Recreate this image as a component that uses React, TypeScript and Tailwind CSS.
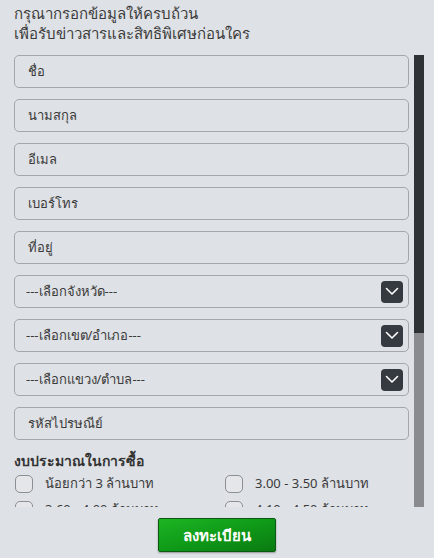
import React from "react";

const fields = ["ชื่อ", "นามสกุล", "อีเมล", "เบอร์โทร", "ที่อยู่"];
const selects = ["---เลือกจังหวัด---", "---เลือกเขต/อำเภอ---", "---เลือกแขวง/ตำบล---"];
const budgets = [
  "น้อยกว่า 3 ล้านบาท",
  "3.00 - 3.50 ล้านบาท",
  "3.60 - 4.00 ล้านบาท",
  "4.10 - 4.50 ล้านบาท",
];

function Field({ label }: { label: string }) {
  return (
    <div className="h-[33px] shrink-0 w-full rounded-[5px] border border-[#a3a6aa] bg-[#dee1e5] flex items-center px-[13px] text-[13px] text-[#3a3a3a]">
      {label}
    </div>
  );
}

function SelectField({ label }: { label: string }) {
  return (
    <div className="h-[33px] shrink-0 w-full rounded-[5px] border border-[#a3a6aa] bg-[#dee1e5] flex items-center justify-between pl-[11px] pr-[5px] text-[13px] text-[#3a3a3a]">
      <span>{label}</span>
      <div className="w-[22px] h-[22px] rounded-[4px] bg-[#353a40] flex items-center justify-center">
        <svg width="14" height="9" viewBox="0 0 14 9" fill="none">
          <path d="M1.5 1.5 L7 7 L12.5 1.5" stroke="#ffffff" strokeWidth="1.6" strokeLinecap="round" strokeLinejoin="round" />
        </svg>
      </div>
    </div>
  );
}

export default function App() {
  return (
    <div
      className="w-[434px] h-[558px] bg-[#dee1e5] flex flex-col overflow-hidden"
      style={{ fontFamily: "Tahoma, 'Noto Sans', 'DejaVu Sans', sans-serif" }}
    >
      <div className="pl-[14px] pt-[3px] text-[15px] leading-[20px] text-[#3b3b3b]">
        <div>กรุณากรอกข้อมูลให้ครบถ้วน</div>
        <div>เพื่อรับข่าวสารและสิทธิพิเศษก่อนใคร</div>
      </div>
      <div className="ml-[14px] mt-[12px] w-[410px] h-[452px] flex gap-[5px]">
        <div className="w-[395px] h-full overflow-hidden flex flex-col">
          <div className="flex flex-col gap-[11px]">
            {fields.map((f) => (
              <Field key={f} label={f} />
            ))}
            {selects.map((s) => (
              <SelectField key={s} label={s} />
            ))}
            <Field label="รหัสไปรษณีย์" />
          </div>
          <div className="mt-[11px] text-[14px] font-bold text-[#333] leading-[20px] shrink-0">งบประมาณในการซื้อ</div>
          <div className="grid grid-cols-[210px_1fr] gap-y-[8px] mt-[4px] shrink-0">
            {budgets.map((b) => (
              <div key={b} className="flex items-center h-[18px]">
                <div className="w-[18px] h-[18px] ml-[1px] rounded-[5px] border border-[#8b8e92] bg-[#e4e6e9] shrink-0" />
                <span className="ml-[12px] text-[13px] text-[#3a3a3a] whitespace-nowrap">{b}</span>
              </div>
            ))}
          </div>
        </div>
        <div className="w-[10px] h-full bg-[#898b8f] flex flex-col">
          <div className="h-[278px] bg-[#2f3235]" />
        </div>
      </div>
      <div className="flex justify-center mt-[11px]">
        <button className="w-[118px] h-[34px] rounded-[2px] border border-[#0b5a12] bg-gradient-to-br from-[#1db524] via-[#0f9a18] to-[#0a7a12] text-white text-[15px] font-bold shadow-[0_1px_2px_rgba(0,0,0,0.35)]">
          ลงทะเบียน
        </button>
      </div>
    </div>
  );
}
